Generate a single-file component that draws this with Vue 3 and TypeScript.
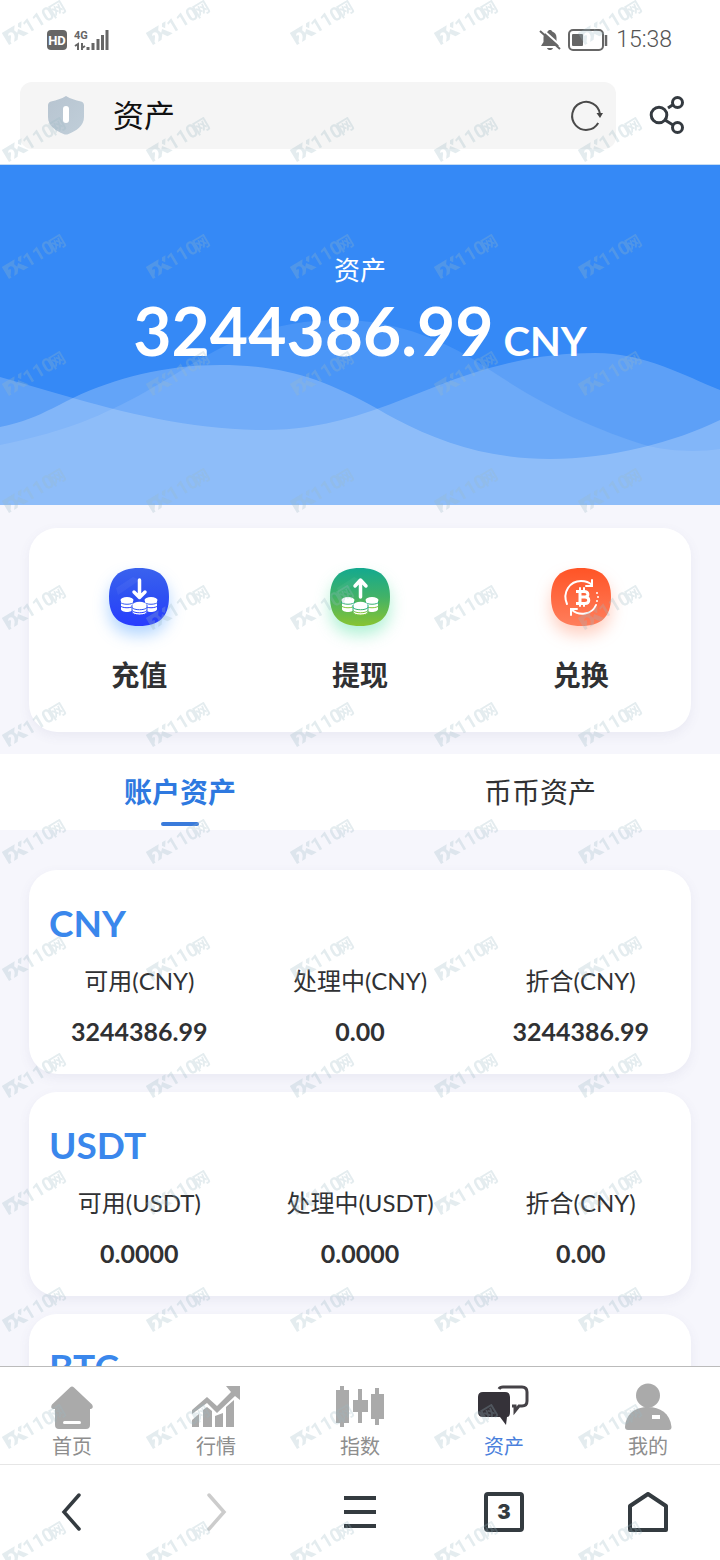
<script setup lang="ts">
import { ref } from 'vue'

interface Field {
  label: string
  value: string
}

interface Asset {
  code: string
  fields: Field[]
}

type ActionId = 'deposit' | 'withdraw' | 'exchange'
type NavId = 'home' | 'market' | 'index' | 'assets' | 'mine'

const pageTitle = ref('资产')
const total = '3244386.99'
const currency = 'CNY'

const actions: { id: ActionId; label: string }[] = [
  { id: 'deposit', label: '充值' },
  { id: 'withdraw', label: '提现' },
  { id: 'exchange', label: '兑换' },
]

const tabs = ['账户资产', '币币资产']
const activeTab = ref(0)

const assets: Asset[] = [
  {
    code: 'CNY',
    fields: [
      { label: '可用(CNY)', value: '3244386.99' },
      { label: '处理中(CNY)', value: '0.00' },
      { label: '折合(CNY)', value: '3244386.99' },
    ],
  },
  {
    code: 'USDT',
    fields: [
      { label: '可用(USDT)', value: '0.0000' },
      { label: '处理中(USDT)', value: '0.0000' },
      { label: '折合(CNY)', value: '0.00' },
    ],
  },
  { code: 'BTC', fields: [] },
]

const navItems: { id: NavId; label: string }[] = [
  { id: 'home', label: '首页' },
  { id: 'market', label: '行情' },
  { id: 'index', label: '指数' },
  { id: 'assets', label: '资产' },
  { id: 'mine', label: '我的' },
]
const activeNav: NavId = 'assets'
</script>

<template>
  <div class="screen">
    <header class="status">
      <div class="status-group">
        <svg width="20" height="20" viewBox="0 0 20 20" aria-hidden="true">
          <rect width="20" height="20" rx="4" fill="#666" />
          <text x="10" y="15" text-anchor="middle" class="hd">HD</text>
        </svg>
        <svg width="35" height="22" viewBox="0 0 35 22" aria-hidden="true">
          <text x="0" y="10" class="net">4G</text>
          <path d="M1 17l3-2v6M8 14v7M8 19l3-2" fill="none" stroke="#666" stroke-width="2" />
          <path d="M14 18v3M19 14v7M24 10v11M28.500 6v15M33 1v20" stroke="#666" stroke-width="3" />
        </svg>
      </div>
      <div class="status-group right">
        <svg width="22" height="24" viewBox="0 0 22 24" aria-hidden="true">
          <path d="M11 2c1 0 2 .6 2.200 1.400C16 4.300 17.500 6.600 17.500 9.500V14l2.500 4H2l2.500-4V9.500c0-2.900 1.500-5.200 4.300-6.100C9 2.600 10 2 11 2zM8 20h6c-.5 1.400-1.600 2-3 2s-2.500-.6-3-2z" fill="#666" />
          <path d="M3 1l19 17" stroke="#fff" stroke-width="2" />
          <path d="M1 3l20 18" stroke="#666" stroke-width="2" />
        </svg>
        <svg class="battery" width="41" height="22" viewBox="0 0 41 22" aria-hidden="true">
          <rect x="1" y="1" width="34" height="20" rx="4" fill="none" stroke="#666" stroke-width="2" />
          <rect x="4" y="5" width="11" height="12" rx="1" fill="#666" />
          <path d="M38 6v11" stroke="#666" stroke-width="2.500" />
        </svg>
        <time class="clock">15:38</time>
      </div>
    </header>

    <div class="address-row">
      <div class="address">
        <svg width="38" height="40" viewBox="0 0 38 40" aria-hidden="true">
          <defs>
            <linearGradient id="shield" x1="0" y1="0" x2="1" y2="1">
              <stop offset="0" stop-color="#b7c4d0" />
              <stop offset="1" stop-color="#c0ced9" />
            </linearGradient>
          </defs>
          <path d="M19 1c5 3 9 4 15 5.500 2 .5 3 2 3 4V22c0 9-8 14-15.500 17q-2.500 1-5 0C9 36 1 31 1 22V10.500c0-2 1-3.500 3-4C10 5 14 4 19 1z" fill="url(#shield)" />
          <rect x="16" y="11" width="6" height="17" rx="3" fill="#fff" />
        </svg>
        <input v-model="pageTitle" class="address-input" type="text" aria-label="地址栏" />
        <button class="plain" type="button" aria-label="刷新">
          <svg width="34" height="34" viewBox="0 0 34 34">
            <path d="M29.200 25A14 14 0 1 1 31 16" fill="none" stroke="#4a4a4a" stroke-width="2" />
            <path d="M27.500 15h6.500l-3 5z" fill="#444" />
          </svg>
        </button>
      </div>
      <button class="plain share" type="button" aria-label="分享">
        <svg width="38" height="40" viewBox="0 0 38 40" fill="none" stroke="#343a40">
          <circle cx="11" cy="20" r="7.800" stroke-width="3" />
          <circle cx="29.500" cy="7.500" r="5" stroke-width="3" />
          <circle cx="29.500" cy="32.500" r="5" stroke-width="3" />
          <path d="M20 13l6-4M17 25l8 5" stroke-width="3" />
        </svg>
      </button>
    </div>

    <main class="content">
      <section class="hero">
        <svg class="waves" viewBox="0 0 720 340" preserveAspectRatio="none" aria-hidden="true">
          <path d="M0 280C40 272 80 260 110 245C190 209 230 155 340 155C400 155 450 178 490 205C550 245 600 266 645 280C670 287 700 287 720 284V340H0z" fill="#fff" fill-opacity=".1" />
          <path d="M0 212C25 219 48 226 73 233C140 252 200 265 265 265C350 265 410 228 470 209C515 194 555 188 595 188C645 188 685 211 720 225V340H0z" fill="#fff" fill-opacity=".2" />
          <path d="M0 262C30 256 45 247 73 233C115 213 165 200 220 200C285 200 325 215 376 243C425 272 480 294 550 294C610 294 675 277 720 255V340H0z" fill="#fff" fill-opacity=".23" />
        </svg>
        <h1 class="hero-label">资产</h1>
        <p class="hero-total">
          <span>{{ total }}</span>
          <small>{{ currency }}</small>
        </p>
      </section>

      <section class="card actions">
        <button v-for="action in actions" :key="action.id" class="action" type="button">
          <svg class="action-icon" :class="action.id" viewBox="0 0 60 58" aria-hidden="true">
            <defs>
              <linearGradient id="fill-deposit" x1="0" y1="0" x2="0" y2="1">
                <stop offset="0" stop-color="#3a62ee" />
                <stop offset=".5" stop-color="#2e50f2" />
                <stop offset="1" stop-color="#283cff" />
              </linearGradient>
              <linearGradient id="fill-withdraw" x1="0" y1="0" x2="0" y2="1">
                <stop offset="0" stop-color="#13a98f" />
                <stop offset=".5" stop-color="#42b267" />
                <stop offset="1" stop-color="#88c431" />
              </linearGradient>
              <linearGradient id="fill-exchange" x1="0" y1="0" x2="0" y2="1">
                <stop offset="0" stop-color="#ff5426" />
                <stop offset="1" stop-color="#ff7e5c" />
              </linearGradient>
            </defs>
            <path d="M30 0C50 0 60 9 60 29S50 58 30 58 0 49 0 29 10 0 30 0z" :fill="`url(#fill-${action.id})`" />
            <template v-if="action.id !== 'exchange'">
              <path d="M7 20L24 9l7 3-22 15z" fill="#fff" fill-opacity=".05" />
              <path
                :d="action.id === 'deposit' ? 'M30.500 12v16M25 24l5.500 5.500L36 24' : 'M30.500 29V13M25 18l5.500-6 5.500 6'"
                fill="none" stroke="#fff" stroke-width="3.500" stroke-linecap="round" stroke-linejoin="round"
              />
              <g fill="#fff">
                <path d="M12 32v9c0 4 12 4 12 0v-9zM36 32v9c0 4 12 4 12 0v-9z" />
                <ellipse cx="18" cy="32" rx="6.500" ry="3" />
                <ellipse cx="42" cy="32" rx="6.500" ry="3" />
              </g>
              <path d="M11 34c2 3 12 3 14 0M11 37.500c2 3 12 3 14 0M35 34c2 3 12 3 14 0M35 37.500c2 3 12 3 14 0" fill="none" :stroke="`url(#fill-${action.id})`" />
              <path d="M23 37v7c0 4 15 4 15 0v-7z" fill="#fff" :stroke="`url(#fill-${action.id})`" />
              <ellipse cx="30.500" cy="37" rx="7" ry="3.200" fill="#fff" />
              <path d="M23 39.500c2 3 13 3 15 0M23 42.500c2 3 13 3 15 0" fill="none" :stroke="`url(#fill-${action.id})`" />
            </template>
            <template v-else>
              <g fill="none" stroke="#fff" stroke-width="2" stroke-linecap="round">
                <path d="M16 36C11 24 19 13 30 13c5 0 8 1 11 4" />
                <path d="M41 12v6h-6" />
                <path d="M45 37c-4 10-17 11-24 5" />
                <path d="M20 47v-6h6" />
                <path d="M29 20v3M33 20v3M29 35v3M33 35v3" />
              </g>
              <path d="M25 23.500h8c5 0 5 5.500 1 5.500 5 0 5 6.500 0 6.500h-9M29 23v13M29 29h5" fill="none" stroke="#fff" stroke-width="3" />
              <g fill="#fff">
                <circle cx="46" cy="25" r="1" />
                <circle cx="47" cy="29" r="1" />
                <circle cx="46" cy="33" r="1" />
              </g>
            </template>
          </svg>
          <span>{{ action.label }}</span>
        </button>
      </section>

      <div class="tabs" role="tablist">
        <button
          v-for="(tab, i) in tabs"
          :key="tab"
          class="tab"
          :class="{ active: i === activeTab }"
          type="button"
          role="tab"
          :aria-selected="i === activeTab"
          @click="activeTab = i"
        >
          {{ tab }}
        </button>
      </div>

      <div class="asset-list">
        <article v-for="asset in assets" :key="asset.code" class="card asset">
          <h2 class="asset-code">{{ asset.code }}</h2>
          <dl class="fields">
            <div v-for="field in asset.fields" :key="field.label" class="field">
              <dt>{{ field.label }}</dt>
              <dd>{{ field.value }}</dd>
            </div>
          </dl>
        </article>
      </div>
    </main>

    <nav class="app-nav">
      <a v-for="item in navItems" :key="item.id" class="nav-item" :class="{ active: item.id === activeNav }" href="#">
        <svg width="54" height="52" viewBox="0 0 54 52" fill="#aaa" aria-hidden="true">
          <template v-if="item.id === 'home'">
            <path d="M25 5.500q2-2 4 0L47 22.500q2 3-1 4.500h-1v16q0 4-4 4H14q-4 0-4-4V27H8q-3-1-1-4.500z" />
            <path d="M19.500 40.500h15" stroke="#fff" stroke-width="3" stroke-linecap="round" />
          </template>
          <template v-else-if="item.id === 'market'">
            <path d="M3 28L18 15l10 9L42 10l-5-6h14v14l-5-4L28 31 18 21 3 32z" />
            <path d="M3 45V38l7-6v13zM14 45V28l4-3 5 4v16zM26 45V34l8-3v14zM37 45V25l8-7v27z" />
          </template>
          <template v-else-if="item.id === 'index'">
            <path d="M3 8h4V4h4v4h5v33h-5v4H7v-4H3zM20 18h5V7h4v11h6v12h-6v11h-4V30h-5zM38 12h4V6h4v6h5v25h-5v6h-4v-6h-4z" />
          </template>
          <template v-else-if="item.id === 'assets'">
            <path d="M22 7q1-2 4-2h19q5 0 5 5v9q0 5-5 5h-3l-4 5v-5h-3" fill="none" stroke="#454247" stroke-width="3" />
            <path d="M6 10h22q5 0 5 5v15q0 5-3 5l-1 8-6-8H6q-5 0-5-5V15q0-5 5-5z" fill="#353239" />
          </template>
          <template v-else>
            <circle cx="27" cy="13.500" r="12" />
            <path d="M4 45C5 31 15 25 27 25s22 6 23.500 20q0 3-3 3H7q-3 0-3-3z" />
            <path d="M31 33h8v4h-8z" fill="#fff" />
          </template>
        </svg>
        <span>{{ item.label }}</span>
      </a>
    </nav>

    <footer class="browser-nav">
      <button class="plain" type="button" aria-label="后退">
        <svg width="40" height="40" viewBox="0 0 40 40"><path d="M27 3L12 20l15 17" fill="none" stroke="#343b40" stroke-width="3.500" stroke-linecap="round" /></svg>
      </button>
      <button class="plain" type="button" aria-label="前进">
        <svg width="40" height="40" viewBox="0 0 40 40"><path d="M13 3l15 17-15 17" fill="none" stroke="#ccc" stroke-width="3.500" stroke-linecap="round" /></svg>
      </button>
      <button class="plain" type="button" aria-label="菜单">
        <svg width="40" height="40" viewBox="0 0 40 40"><path d="M4 6h32M4 20h32M4 34h32" stroke="#343b40" stroke-width="4" /></svg>
      </button>
      <button class="plain" type="button" aria-label="标签页"><span class="tab-count">3</span></button>
      <button class="plain" type="button" aria-label="主页">
        <svg width="40" height="40" viewBox="0 0 40 40"><path d="M2 14L20 2l18 12v24H2z" fill="none" stroke="#343b40" stroke-width="4" stroke-linejoin="round" /></svg>
      </button>
    </footer>

    <svg class="watermark" width="100%" height="100%" aria-hidden="true">
      <defs>
        <pattern id="mark" width="144" height="117" patternUnits="userSpaceOnUse">
          <g transform="translate(9 45) rotate(-31)">
            <path d="M0 0V-14H15L12-10 13-7 14-5 10 0H6L9-4Q11-8 8-10 5-11 4-8H6Q7-8 6-6L3-2V0Z" />
            <path d="M13-6l3-3 7 9h-6zM17-11l2-3h4l-4 6z" />
            <text x="22" y="0" class="mark-number">110</text>
            <text x="52" y="0" class="mark-word">网</text>
          </g>
        </pattern>
      </defs>
      <rect width="100%" height="100%" fill="url(#mark)" />
    </svg>
  </div>
</template>

<style>
body {
  margin: 0;
}
</style>

<style scoped>
.screen {
  position: relative;
  display: flex;
  flex-direction: column;
  height: 100vh;
  overflow: hidden;
  background: #fff;
  color: #303133;
  font-family: Lato, "Noto Sans CJK SC", sans-serif;
}

.screen * {
  box-sizing: border-box;
}

button,
input {
  margin: 0;
  padding: 0;
  border: 0;
  background: none;
  color: inherit;
  font-family: inherit;
}

svg {
  display: block;
}

.status {
  display: flex;
  flex: none;
  justify-content: space-between;
  align-items: center;
  height: 82px;
  padding: 0 48px 2px 47px;
}

.status-group {
  display: flex;
  align-items: center;
  gap: 7px;
}

.hd {
  fill: #fff;
  font-family: Roboto, sans-serif;
  font-size: 13px;
  font-weight: 700;
}

.net {
  fill: #666;
  font-family: Roboto, sans-serif;
  font-size: 11px;
  font-weight: 700;
}

.clock {
  color: #555;
  font-family: Roboto, sans-serif;
  font-size: 23px;
  font-weight: 300;
  line-height: 28px;
}

.address-row {
  display: flex;
  flex: none;
  align-items: center;
  gap: 32px;
  padding: 0 34px 15px 20px;
  border-bottom: 1px solid #c5dcf3;
}

.address {
  display: flex;
  flex: 1;
  align-items: center;
  gap: 28px;
  min-width: 0;
  height: 67px;
  padding: 0 13px 2px 27px;
  border-radius: 12px;
  background: #f5f5f5;
}

.address-input {
  flex: 1;
  min-width: 0;
  color: #111;
  font-size: 31px;
  line-height: 44px;
}

.share {
  padding-bottom: 2px;
}

.content {
  display: flex;
  flex: 1;
  flex-direction: column;
  min-height: 0;
  overflow-y: auto;
  background: #f6f6fc;
  scrollbar-width: none;
}

.hero {
  position: relative;
  flex: none;
  padding: 85px 20px 133px;
  background: #3589f6;
  color: #fff;
  text-align: center;
}

.waves {
  position: absolute;
  inset: 0;
  width: 100%;
  height: 100%;
}

.hero-label,
.hero-total {
  position: relative;
  margin: 0;
}

.hero-label {
  font-size: 26px;
  font-weight: 400;
  line-height: 40px;
}

.hero-total {
  display: flex;
  justify-content: center;
  align-items: baseline;
  gap: 10px;
  font-size: 66px;
  font-weight: 700;
  line-height: 82px;
}

.hero-total small {
  font-size: 40px;
  line-height: 48px;
}

.card {
  margin: 0 29px;
  border-radius: 28px;
  background: #fff;
  box-shadow: 0 4px 12px rgba(90, 90, 140, 0.08);
}

.actions {
  display: grid;
  flex: none;
  grid-template-columns: repeat(3, 1fr);
  margin-top: 23px;
  padding: 40px 0 37px;
}

.action {
  display: flex;
  flex-direction: column;
  align-items: center;
  gap: 29px;
  font-size: 28px;
  font-weight: 700;
  line-height: 40px;
}

.action-icon {
  width: 60px;
  height: 58px;
}

.deposit {
  filter: drop-shadow(0 9px 8px rgba(60, 150, 255, 0.4));
}

.withdraw {
  filter: drop-shadow(0 9px 8px rgba(60, 220, 150, 0.4));
}

.exchange {
  filter: drop-shadow(0 9px 8px rgba(255, 120, 80, 0.35));
}

.tabs {
  display: grid;
  flex: none;
  grid-template-columns: 1fr 1fr;
  margin-top: 22px;
  background: #fff;
}

.tab {
  display: flex;
  flex-direction: column;
  align-items: center;
  gap: 10px;
  padding: 18px 0 4px;
  font-size: 28px;
  line-height: 40px;
}

.tab::after {
  width: 38px;
  height: 4px;
  border-radius: 2px;
  content: "";
}

.tab.active {
  color: #2e79e0;
  font-weight: 700;
}

.tab.active::after {
  background: #3a7bdb;
}

.asset-list {
  display: flex;
  flex: none;
  flex-direction: column;
  gap: 18px;
  padding: 40px 0 18px;
}

.asset {
  min-height: 204px;
  padding: 29px 0 27px;
}

.asset-code {
  margin: 0 20px;
  color: #3a87ec;
  font-size: 37px;
  font-weight: 700;
  line-height: 48px;
}

.fields {
  display: grid;
  grid-template-columns: repeat(3, 1fr);
  margin: 18px 0 0;
  text-align: center;
}

.field {
  display: grid;
  gap: 18px;
  line-height: 32px;
}

.field dt {
  font-size: 24px;
}

.field dd {
  margin: 0;
  font-size: 25px;
  font-weight: 700;
}

.app-nav {
  display: grid;
  flex: none;
  grid-template-columns: repeat(5, 1fr);
  border-top: 1px solid #bbb;
}

.nav-item {
  display: flex;
  flex-direction: column;
  align-items: center;
  padding: 15px 0 6px;
  color: #8e8e8e;
  font-size: 20px;
  line-height: 24px;
  text-decoration: none;
}

.nav-item.active {
  color: #4a7fdc;
}

.browser-nav {
  display: grid;
  flex: none;
  grid-template-columns: repeat(5, 1fr);
  align-items: center;
  height: 96px;
  padding-bottom: 2px;
  border-top: 1px solid #e6e6e6;
}

.plain {
  display: flex;
  justify-content: center;
  align-items: center;
}

.tab-count {
  width: 40px;
  height: 40px;
  border: 4px solid #343b40;
  border-radius: 4px;
  color: #343b40;
  font-family: Inter, sans-serif;
  font-size: 20px;
  font-weight: 900;
  line-height: 32px;
}

.watermark {
  position: absolute;
  inset: 0;
  fill: #9bb9c3;
  opacity: 0.27;
  pointer-events: none;
}

.mark-number {
  font-family: Roboto, sans-serif;
  font-size: 19px;
  font-weight: 700;
}

.mark-word {
  font-size: 16px;
  font-weight: 700;
}
</style>
